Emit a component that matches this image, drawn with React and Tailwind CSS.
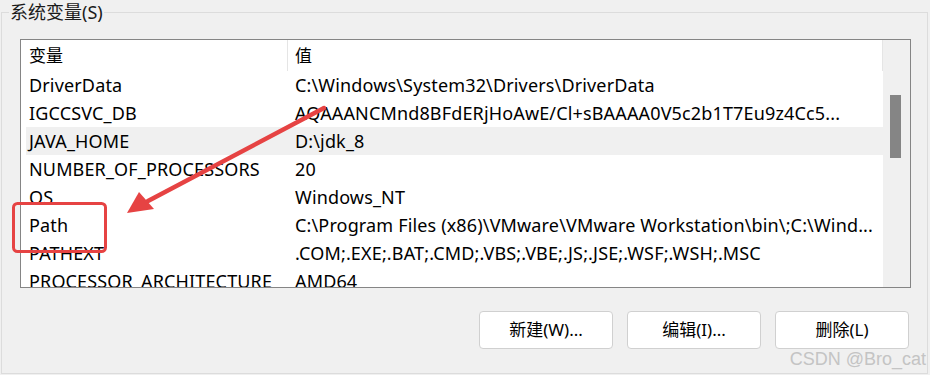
import React from "react";

const rows = [
  ["DriverData", "C:\\Windows\\System32\\Drivers\\DriverData", false],
  ["IGCCSVC_DB", "AQAAANCMnd8BFdERjHoAwE/Cl+sBAAAA0V5c2b1T7Eu9z4Cc5...", false],
  ["JAVA_HOME", "D:\\jdk_8", true],
  ["NUMBER_OF_PROCESSORS", "20", false],
  ["OS", "Windows_NT", false],
  ["Path", "C:\\Program Files (x86)\\VMware\\VMware Workstation\\bin\\;C:\\Wind...", false],
  ["PATHEXT", ".COM;.EXE;.BAT;.CMD;.VBS;.VBE;.JS;.JSE;.WSF;.WSH;.MSC", false],
  ["PROCESSOR_ARCHITECTURE", "AMD64", false],
];

const font = { fontFamily: "'Noto Sans', 'Noto Sans CJK SC', sans-serif" };

export default function App() {
  return (
    <div
      className="relative w-[930px] h-[375px] overflow-hidden bg-[#f0f0f0] text-black"
      style={font}
    >
      <fieldset className="ml-[1px] w-[927px] h-[374px] border border-[#dcdcdc] pl-[18px] pr-[15px] pt-[15px]">
        <legend className="ml-[-11px] px-[1px] text-[18px] leading-[24px] text-[#1a1a1a]">
          系统变量(S)
        </legend>
        <div className="flex w-[891px] h-[249px] border border-[#858585] bg-white overflow-hidden">
          <div className="w-[862px] flex flex-col overflow-hidden">
            <div className="flex h-[31px] shrink-0 items-center text-[17px]">
              <div className="w-[266px] pl-[8px]">变量</div>
              <div className="w-px h-full bg-[#e5e5e5]"></div>
              <div className="flex-1 pl-[7px]">值</div>
              <div className="w-px h-full bg-[#e5e5e5]"></div>
            </div>
            {rows.map(([name, value, sel]) => (
              <div
                key={name}
                className={`ml-[5px] flex h-[28px] shrink-0 items-center text-[18px] tracking-[0.15px] whitespace-nowrap ${
                  sel ? "bg-[#f0f0f0]" : ""
                }`}
              >
                <div className="w-[261px] pl-[3px] overflow-hidden">{name}</div>
                <div className="flex-1 pl-[8px] overflow-hidden">{value}</div>
              </div>
            ))}
          </div>
          <div className="w-[27px] bg-[#f0f0f0] pl-[7px] pt-[55px]">
            <div className="w-[11px] h-[63px] bg-[#858585]"></div>
          </div>
        </div>
        <div className="mt-[23px] mr-[3px] flex justify-end gap-[14px]">
          {["新建(W)...", "编辑(I)...", "删除(L)"].map((t) => (
            <button
              key={t}
              className="w-[134px] h-[38px] rounded-[4px] border border-[#d0d0d0] bg-white text-[17px] text-black"
            >
              {t}
            </button>
          ))}
        </div>
      </fieldset>

      <svg
        className="pointer-events-none absolute left-0 top-0"
        width="930"
        height="375"
        viewBox="0 0 930 375"
      >
        <rect
          x="13.5"
          y="203.5"
          width="92"
          height="48"
          rx="4"
          fill="none"
          stroke="#e64343"
          strokeWidth="3"
        />
        <line
          x1="324"
          y1="108"
          x2="148"
          y2="201"
          stroke="#e64343"
          strokeWidth="4.5"
          strokeLinecap="round"
        />
        <polygon points="127,213 139,192 154,209" fill="#e64343" />
      </svg>

      <div
        className="absolute right-[4px] bottom-[2px] text-[18px] text-[#c4c4c4]"
        style={{ fontFamily: "'Liberation Sans', Arial, sans-serif" }}
      >
        CSDN @Bro_cat
      </div>
    </div>
  );
}
